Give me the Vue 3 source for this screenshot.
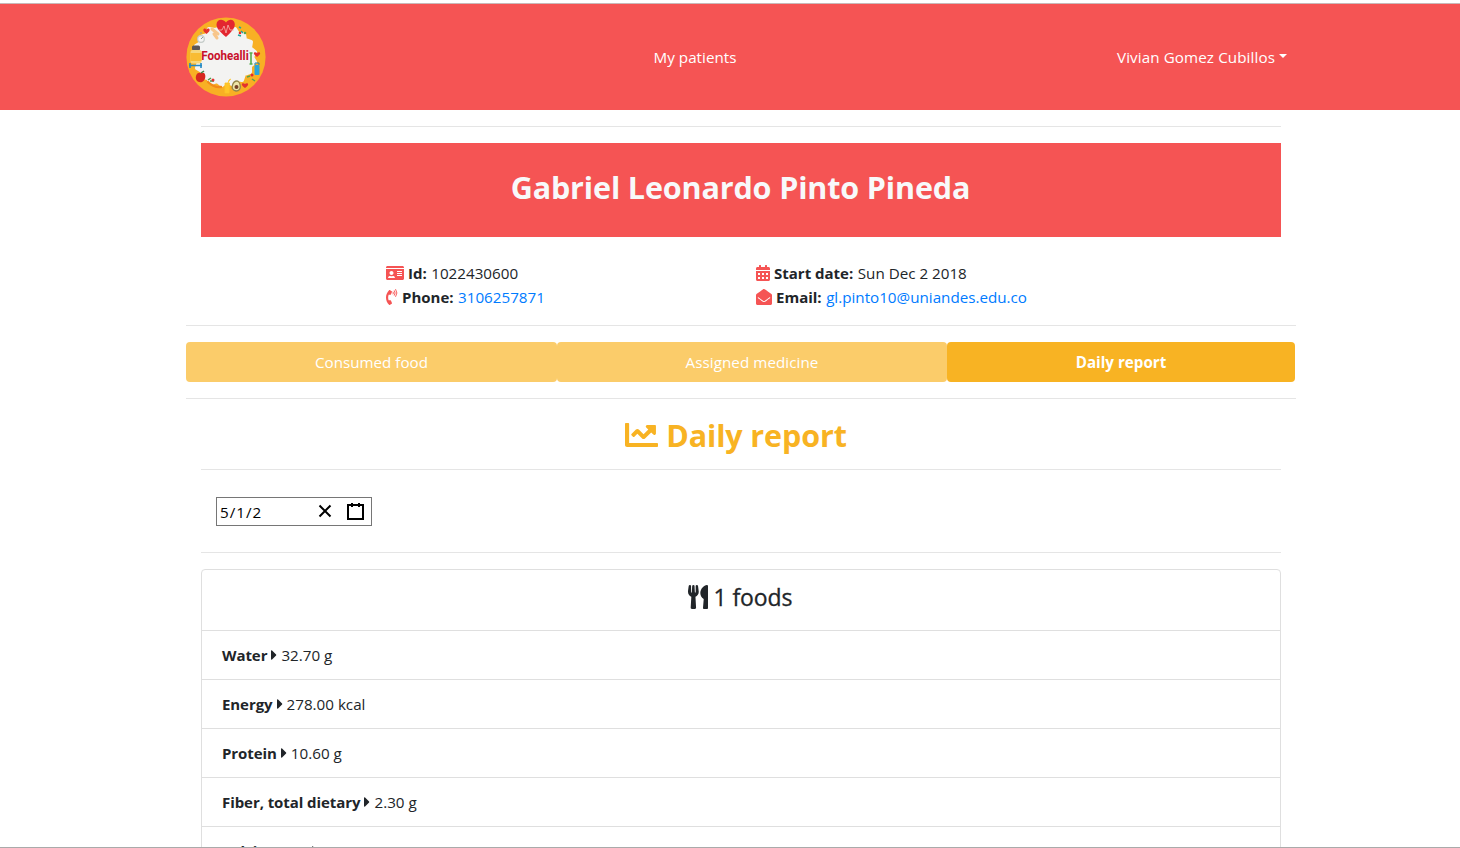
<script setup>
const tabs = [
  { label: 'Consumed food', cls: 'tab-food' },
  { label: 'Assigned medicine', cls: 'tab-medicine' },
  { label: 'Daily report', cls: 'tab-report active' },
]
const nutrients = [
  { name: 'Water', amount: '32.70 g' },
  { name: 'Energy', amount: '278.00 kcal' },
  { name: 'Protein', amount: '10.60 g' },
  { name: 'Fiber, total dietary', amount: '2.30 g' },
  { name: 'Calcium, Ca', amount: '40.00 mg' },
]
</script>

<template>
  <div class="page">
    <div class="top-edge"></div>
    <nav class="navbar">
      <svg class="logo" viewBox="0 0 80 80">
        <circle cx="40" cy="40" r="39.6" fill="#f8b024" />
        <path d="M40 10l4 4 5-2 3 5 6 0 1 6 6 2-1 6 5 4-3 5 3 5-5 4 0 6-6 2-2 6-6-1-4 5-5-3-5 4-5-4-6 2-3-5-6-1 0-6-5-3 2-6-5-5 4-5-2-6 5-3 0-6 6-2 2-6 6 1z" fill="#f3f3f2" stroke="#f3f3f2" stroke-width="4" stroke-linejoin="round" />
        <path d="M40 20C33 14 30.500 11 30.500 7.500C30.500 2 37 1 40 5.500C43 1 48.800 2 48.800 7.500C48.800 11 46 14.500 40 20z" fill="#e32630" />
        <path d="M33 13h3l2-4 2 7 2-8 2 5h4" fill="none" stroke="#f7b5ad" stroke-width=".8" />
        <path d="M20.500 17c-6-4-2-7 0-4.500 2-2.500 6 .500 0 4.500z" fill="#e4312d" />
        <path d="M26 12l6 5m-4 0l3 4" stroke="#f8c68b" stroke-width="3" stroke-linecap="round" />
        <circle cx="15" cy="22" r="3.300" fill="#f5f5f5" stroke="#c4cbc8" stroke-width="1.200" />
        <path d="M15 17v-2m0 7l2-2" stroke="#8a9899" stroke-width="1" />
        <rect x="6" y="28.500" width="8" height="5" rx="1.500" fill="#5e5757" />
        <rect x="4.500" y="33" width="11" height="13.500" rx="2" fill="#f6d77d" />
        <rect x="4.500" y="36" width="11" height="8" fill="#f9bc33" />
        <path d="M3 48.500h13M4 46v5m11-5v5" stroke="#2389c4" stroke-width="1.600" />
        <path d="M16 56c4-2 5 7 0 9-4 1-7-2-6-6 .500-3 3-4 6-3z" fill="#d8281f" />
        <path d="M15 56l3-2" stroke="#3d8746" stroke-width="1.500" />
        <path d="M22 65q6 6 13 5" fill="none" stroke="#f28a17" stroke-width="2.400" stroke-linecap="round" />
        <path d="M22 63l3-2m-1 3l4 0" stroke="#4d9948" stroke-width="1.500" />
        <circle cx="27" cy="63" r="1.500" fill="#e1322f" />
        <path d="M39 66h4.500l-.500 10h-4zM42 66l1-3 2-1" fill="#ffc629" stroke="#fbc428" stroke-width=".8" />
        <path d="M51 64c3 0 6 10-1 10-7-1-3-10 1-10z" fill="#eee4a9" stroke="#93854a" stroke-width="1.300" />
        <circle cx="50.500" cy="70" r="2" fill="#754127" />
        <path d="M59 71c-6-4-2-6 0-4 2-2 6 0 0 4z" fill="#e4312d" />
        <path d="M66 62l3 2m-8-4l3-1" stroke="#55a14c" stroke-width="1.500" />
        <circle cx="66" cy="58" r="1.500" fill="#e22b2d" />
        <path d="M53 10l2 1m0 3l2 2m-5 2l3 1" stroke="#20a39e" stroke-width="1.500" />
        <circle cx="59" cy="16" r="1.300" fill="#58a54c" />
        <circle cx="54" cy="16" r="1.300" fill="#e22b2d" />
        <path d="M65 36v11m-1.500-11h3m-3 11h3" fill="none" stroke="#56ad4b" stroke-width="1.600" />
        <path d="M71 40c-6-4-2-6 0-4 2-2 6 0 0 4z" fill="#e4312d" />
        <rect x="68.500" y="48" width="5" height="10" rx="1" fill="#28a6d9" />
        <path d="M69 48v-2h4v2" fill="none" stroke="#1d83b3" />
        <text class="logo-name" x="39" y="43" text-anchor="middle" textLength="47.5" lengthAdjust="spacingAndGlyphs">Foohealli</text>
      </svg>
      <a class="nav-link">My patients</a>
      <a class="nav-user">Vivian Gomez Cubillos<i class="caret"></i></a>
    </nav>

    <main class="container">
      <div class="inner">
        <hr />
        <header class="patient-name"><h1>Gabriel Leonardo Pinto Pineda</h1></header>
      </div>

      <section class="details">
        <div class="detail">
          <svg class="ic" width="18" height="16" viewBox="0 0 576 512"><path d="M528 32H48C21.500 32 0 53.500 0 80v16h576V80c0-26.500-21.500-48-48-48zM0 432c0 26.500 21.500 48 48 48h480c26.500 0 48-21.500 48-48V128H0v304zm352-232c0-4.400 3.600-8 8-8h144c4.400 0 8 3.600 8 8v16c0 4.400-3.600 8-8 8H360c-4.400 0-8-3.600-8-8v-16zm0 64c0-4.400 3.600-8 8-8h144c4.400 0 8 3.600 8 8v16c0 4.400-3.600 8-8 8H360c-4.400 0-8-3.600-8-8v-16zm0 64c0-4.400 3.600-8 8-8h144c4.400 0 8 3.600 8 8v16c0 4.400-3.600 8-8 8H360c-4.400 0-8-3.600-8-8v-16zM176 192c35.300 0 64 28.700 64 64s-28.700 64-64 64-64-28.700-64-64 28.700-64 64-64zM67.100 396.200C75.500 370.500 99.600 352 128 352h8.200c12.300 5.100 25.700 8 39.800 8s27.600-2.900 39.800-8h8.200c28.400 0 52.500 18.500 60.900 44.200 3.200 9.900-5.200 19.800-15.600 19.800H82.700c-10.400 0-18.800-10-15.600-19.800z" /></svg>
          <b>Id:</b><span>1022430600</span>
        </div>
        <div class="detail">
          <svg class="ic" width="14" height="16" viewBox="0 0 448 512"><path fill-rule="evenodd" d="M0 464c0 26.500 21.500 48 48 48h352c26.500 0 48-21.500 48-48V192H0v272zM64 256h64v64H64zM192 256h64v64h-64zM320 256h64v64h-64zM64 384h64v64H64zM192 384h64v64h-64zM320 384h64v64h-64zM400 64h-48V16c0-8.800-7.200-16-16-16h-32c-8.800 0-16 7.200-16 16v48H160V16c0-8.800-7.200-16-16-16h-32c-8.800 0-16 7.200-16 16v48H48C21.500 64 0 85.500 0 112v48h448v-48c0-26.500-21.500-48-48-48z" /></svg>
          <b>Start date:</b><span>Sun Dec 2 2018</span>
        </div>
        <div class="detail">
          <svg class="ic" width="12" height="16" viewBox="0 0 384 512">
            <path d="M97.333 506.966c-129.874-129.874-129.681-340.252 0-469.933 5.698-5.698 14.527-6.632 21.263-2.422l64.817 40.513a17.187 17.187 0 0 1 6.849 20.958l-32.408 81.021a17.188 17.188 0 0 1-17.669 10.719l-55.810-5.580c-21.051 58.261-20.612 122.471 0 179.515l55.811-5.581a17.188 17.188 0 0 1 17.669 10.719l32.408 81.022a17.188 17.188 0 0 1-6.849 20.958l-64.817 40.513a17.190 17.190 0 0 1-21.264-2.422z" />
            <g fill="none" stroke="currentColor" stroke-width="30" stroke-linecap="round"><path d="M229 97a64 64 0 0 1 0 62" /><path d="M270 56a128 128 0 0 1 0 144" /><path d="M312 16a192 192 0 0 1 0 224" /></g>
          </svg>
          <b>Phone:</b><a>3106257871</a>
        </div>
        <div class="detail">
          <svg class="ic" width="16" height="16" viewBox="0 0 512 512"><path d="M512 464c0 26.510-21.490 48-48 48H48c-26.510 0-48-21.490-48-48V200.724a48 48 0 0 1 18.387-37.776c24.913-19.529 45.501-35.365 164.200-121.511C199.412 29.170 232.797-.347 256 .003c23.198-.354 56.596 29.172 73.413 41.433 118.687 86.137 139.303 101.995 164.200 121.512A48 48 0 0 1 512 200.724V464zm-65.666-196.605c-2.563-3.728-7.700-4.595-11.339-1.907-22.845 16.873-55.462 40.705-105.582 77.079-16.825 12.266-50.210 41.781-73.413 41.430-23.211.344-56.559-29.143-73.413-41.430-50.114-36.370-82.734-60.204-105.582-77.079-3.639-2.688-8.776-1.821-11.339 1.907l-9.072 13.196a7.998 7.998 0 0 0 1.839 10.967c22.887 16.899 55.454 40.690 105.303 76.868 20.274 14.781 56.524 47.813 92.264 47.573 35.724.242 71.961-32.771 92.263-47.573 49.850-36.179 82.418-59.970 105.303-76.868a7.998 7.998 0 0 0 1.839-10.967l-9.071-13.196z" /></svg>
          <b>Email:</b><a>gl.pinto10@uniandes.edu.co</a>
        </div>
      </section>

      <hr />
      <div class="tabs">
        <a v-for="tab in tabs" :key="tab.label" class="tab" :class="tab.cls">{{ tab.label }}</a>
      </div>
      <hr />

      <h2 class="report-title">
        <svg width="33" height="32" viewBox="0 0 512 512" preserveAspectRatio="none"><path d="M496 384H64V80c0-8.840-7.160-16-16-16H16C7.160 64 0 71.160 0 80v336c0 17.670 14.330 32 32 32h464c8.840 0 16-7.160 16-16v-32c0-8.840-7.160-16-16-16zM464 96H345.940c-21.380 0-32.090 25.850-16.970 40.970l32.400 32.400L288 242.750l-73.370-73.370c-12.500-12.500-32.760-12.500-45.250 0l-68.690 68.690c-6.250 6.250-6.250 16.380 0 22.630l22.620 22.620c6.250 6.250 16.380 6.250 22.630 0L192 237.250l73.370 73.370c12.500 12.500 32.760 12.500 45.250 0l96-96 32.400 32.400c15.120 15.120 40.970 4.410 40.970-16.970V112c.010-8.840-7.150-16-15.990-16z" /></svg>
        <span>Daily report</span>
      </h2>

      <div class="inner">
        <hr />
        <div class="date-box">
          <span>5/1/2</span>
          <svg class="clear" width="14" height="14" viewBox="0 0 14 14"><path d="M1.500 1.500l11 11m0-11l-11 11" /></svg>
          <svg class="calendar" width="17" height="19" viewBox="0 0 17 19"><path d="M1 3h15v14H1zM5 1v4m7-4v4" /></svg>
        </div>
        <hr />

        <section class="card">
          <h4 class="card-title">
            <svg width="20" height="24" viewBox="0 0 416 512" preserveAspectRatio="none"><path d="M207.900 15.200c.8 4.700 16.100 94.500 16.100 128.800 0 52.300-27.800 89.600-68.900 104.600L168 486.700c.7 13.700-10.200 25.300-24 25.300H80c-13.700 0-24.700-11.500-24-25.300l12.900-238.100C27.700 233.600 0 196.200 0 144 0 109.600 15.300 19.900 16.100 15.200 19.300-5.100 61.400-5.400 64 16.300v141.200c1.300 3.400 15.100 3.200 16 0 1.400-25.300 7.900-139.200 8-141.800 3.300-20.800 44.700-20.800 47.900 0 .2 2.700 6.600 116.500 8 141.800.9 3.200 14.800 3.400 16 0V16.300c2.600-21.600 44.800-21.400 47.900-1.100zm119.200 285.700l-15 185.100c-1.200 14 9.900 26 23.900 26h56c13.300 0 24-10.700 24-24V24c0-13.200-10.700-24-24-24-82.500 0-221.400 178.500-64.900 300.900z" /></svg>
            <span>1 foods</span>
          </h4>
          <div v-for="n in nutrients" :key="n.name" class="nutrient">
            <b>{{ n.name }}</b>
            <svg width="6" height="16" viewBox="0 0 192 512"><path d="M0 384.662V127.338c0-17.818 21.543-26.741 34.142-14.142l128.662 128.662c7.810 7.810 7.810 20.474 0 28.284L34.142 398.804C21.543 411.404 0 402.480 0 384.662z" /></svg>
            <span>{{ n.amount }}</span>
          </div>
        </section>
      </div>
    </main>
  </div>
</template>

<style>
body { background: #fff; overflow: hidden; }
</style>

<style scoped>
.page {
  box-sizing: border-box;
  height: 848px;
  overflow: hidden;
  border-bottom: 1px solid #aaa;
  font: 15.2px/24px "Open Sans", "Noto Sans", sans-serif;
  color: #212529;
}
b { font-size: 15px; font-weight: 700; }
svg { display: block; flex: none; fill: currentColor; }
hr { margin: 0; border: 0; height: 1px; background: #e5e5e5; }
.top-edge { height: 3px; background: #fff; border-bottom: 1px solid #c9b8b8; }
.navbar {
  box-sizing: border-box;
  height: 106px;
  padding: 0 173px 0 186px;
  background: #f55454;
  color: #fff;
  display: grid;
  grid-template-columns: 467.500px 1fr auto;
  align-items: center;
}
.logo { width: 80px; height: 80px; }
.logo-name { font: 700 12px Roboto, sans-serif; fill: #c8102a; }
.nav-link { letter-spacing: .03px; }
.nav-user { display: flex; align-items: center; letter-spacing: .1px; }
.caret { margin: -3px 0 0 4px; border: 4.8px solid transparent; border-top-color: #fff; border-bottom: 0; }
.container { width: 1110px; margin-left: 186px; padding-top: 16px; }
.inner { margin: 0 15px; }
.patient-name {
  height: 94px;
  margin-top: 16px;
  background: #f55454;
  color: #f8f9fa;
  text-align: center;
}
h1 { margin: 0; padding: 24px 1px 0 0; font-size: 30.500px; line-height: 40px; letter-spacing: -.14px; }
.details {
  display: grid;
  grid-template-columns: 370px 370px;
  margin: 24px 0 16px 199.500px;
}
.detail { display: flex; align-items: center; gap: 4.500px; height: 24px; white-space: nowrap; }
.ic { color: #f55454; }
.detail a { color: #007bff; }
.tabs { display: flex; width: 1109px; margin: 16px 0; }
.tab {
  height: 40px;
  border-radius: 4px;
  background: #fbcc6a;
  color: #fff;
  line-height: 41px;
  text-align: center;
}
.tab-food { width: 371px; }
.tab-medicine { width: 390px; letter-spacing: .06px; }
.tab-report { width: 348px; }
.active { background: #f8b323; font-weight: 700; }
.report-title {
  display: flex;
  justify-content: center;
  gap: 8px;
  height: 39px;
  margin: 15px 0 16px;
  padding-right: 10px;
  color: #f8b323;
  font-size: 30.500px;
  line-height: 42px;
  letter-spacing: -.12px;
}
.report-title svg { margin-top: 5px; }
.date-box {
  box-sizing: border-box;
  width: 156px;
  height: 29px;
  margin: 27px 0 26px 15px;
  padding: 0 7px 1px 3px;
  display: flex;
  align-items: center;
  border: 1px solid #767676;
  color: #000;
  letter-spacing: 1px;
}
.date-box span { padding-top: 1px; }
.date-box svg { fill: none; stroke: #000; stroke-width: 2; }
.clear { margin-left: auto; }
.calendar { margin-left: 15px; }
.card { margin-top: 16px; border: 1px solid #dfdfdf; border-radius: 4px; }
.card-title {
  display: flex;
  justify-content: center;
  gap: 5px;
  height: 60px;
  margin: 0;
  padding-right: 1px;
  font-size: 23px;
  font-weight: 500;
  line-height: 54px;
  letter-spacing: -.08px;
}
.card-title span { -webkit-text-stroke: .3px #212529; }
.card-title svg { margin-top: 15px; }
.nutrient {
  box-sizing: border-box;
  height: 49px;
  padding: 0 20px 1px;
  display: flex;
  align-items: center;
  border-top: 1px solid #dfdfdf;
}
.nutrient svg { margin: 0 4px; }
.nutrient b { letter-spacing: -.07px; }
</style>
